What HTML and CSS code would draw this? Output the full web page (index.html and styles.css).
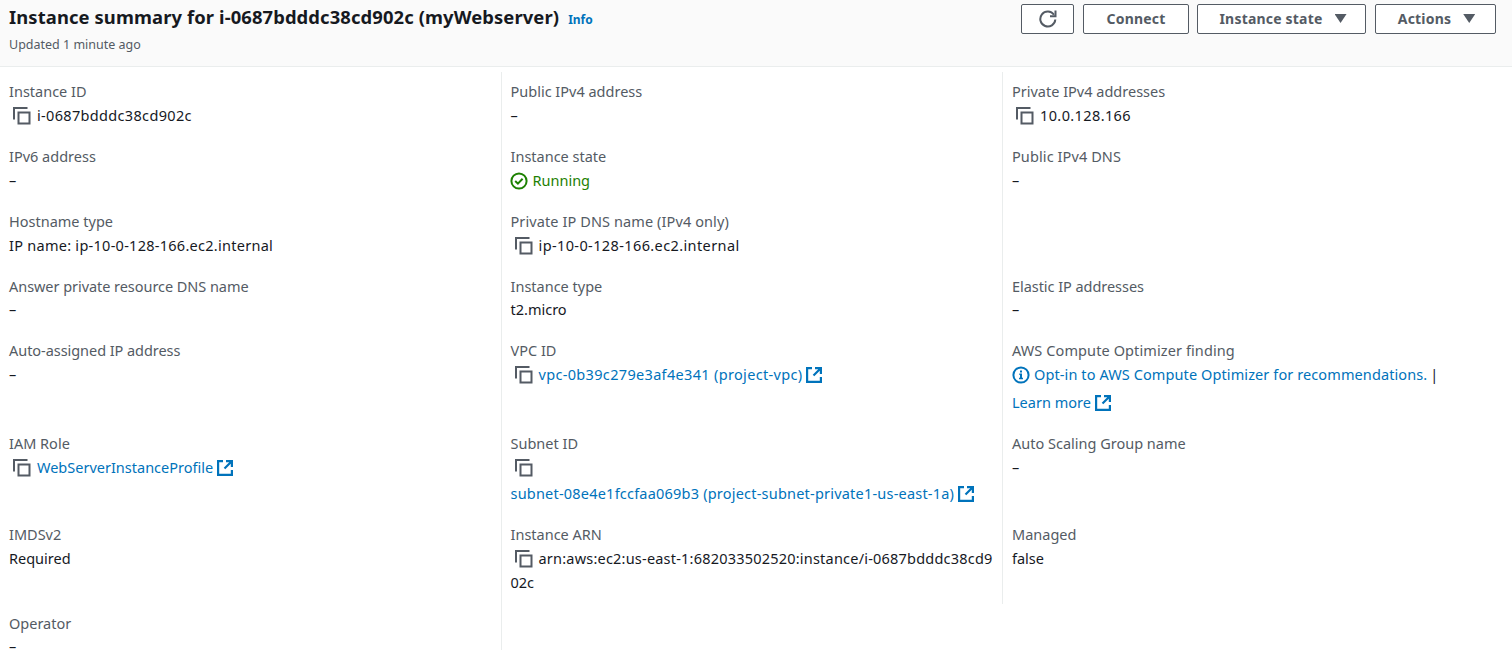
FILE: index.html
```html
<!DOCTYPE html>
<html lang="en">
<head>
<meta charset="utf-8">
<title>Instance summary</title>
<link rel="stylesheet" href="styles.css">
</head>
<body>
<svg class="sprite" aria-hidden="true">
  <symbol id="copy" viewBox="0 0 18 18"><path d="M1 12.5V1h13.5M5.5 5.5h11v11h-11z" fill="none" stroke="currentColor" stroke-width="2"/></symbol>
  <symbol id="external" viewBox="0 0 16 16"><path d="M6 1.1H1.1v13.8h13.8V10M9 1.1h5.9V7M14.5 1.5L7.5 8.5" fill="none" stroke="currentColor" stroke-width="2.2"/></symbol>
  <symbol id="check" viewBox="0 0 18 18"><circle cx="9" cy="9" r="7.6" fill="none" stroke="currentColor" stroke-width="2"/><path d="M5.2 9l2.7 2.6 4.7-4.8" fill="none" stroke="currentColor" stroke-width="2"/></symbol>
  <symbol id="info" viewBox="0 0 18 18"><circle cx="9" cy="9" r="7.6" fill="none" stroke="currentColor" stroke-width="2"/><path d="M8 4.5h2v2H8zM7.3 7.5H10v4.3h1v1.4H7v-1.4h1V8.9h-.7z" fill="currentColor"/></symbol>
  <symbol id="refresh" viewBox="0 0 18 18"><path d="M16.3 9.5A7.5 7.5 0 1 1 15 4.8" fill="none" stroke="currentColor" stroke-width="2"/><path d="M16.5 0.5V6.2H11" fill="none" stroke="currentColor" stroke-width="2"/></symbol>
</svg>
<header class="header">
  <div class="heading">
    <div class="title-row"><h1 class="title">Instance summary for i-0687bdddc38cd902c (myWebserver)</h1><a class="info-link">Info</a></div>
    <p class="updated">Updated 1 minute ago</p>
  </div>
  <div class="actions">
    <button class="btn btn-refresh"><svg class="icon"><use href="#refresh"/></svg></button>
    <button class="btn btn-connect">Connect</button>
    <button class="btn btn-state">Instance state<i class="caret"></i></button>
    <button class="btn btn-actions">Actions<i class="caret"></i></button>
  </div>
</header>
<main class="grid">
  <div class="cell"><div class="label">Instance ID</div><div class="value"><svg class="icon copy"><use href="#copy"/></svg><span class="ident">i-0687bdddc38cd902c</span></div></div>
  <div class="cell line"><div class="label">Public IPv4 address</div><div class="value">–</div></div>
  <div class="cell line"><div class="label">Private IPv4 addresses</div><div class="value"><svg class="icon copy"><use href="#copy"/></svg><span class="host">10.0.128.166</span></div></div>

  <div class="cell"><div class="label">IPv6 address</div><div class="value">–</div></div>
  <div class="cell line"><div class="label">Instance state</div><div class="value running"><svg class="icon status"><use href="#check"/></svg><span>Running</span></div></div>
  <div class="cell line"><div class="label wide">Public IPv4 DNS</div><div class="value">–</div></div>

  <div class="cell"><div class="label">Hostname type</div><div class="value"><span class="hostname">IP name: ip-10-0-128-166.ec2.internal</span></div></div>
  <div class="cell line"><div class="label wide">Private IP DNS name (IPv4 only)</div><div class="value"><svg class="icon copy"><use href="#copy"/></svg><span class="host">ip-10-0-128-166.ec2.internal</span></div></div>
  <div class="cell line"></div>

  <div class="cell"><div class="label tight">Answer private resource DNS name</div><div class="value raised">–</div></div>
  <div class="cell line"><div class="label">Instance type</div><div class="value raised">t2.micro</div></div>
  <div class="cell line"><div class="label tight">Elastic IP addresses</div><div class="value raised">–</div></div>

  <div class="cell"><div class="label tight">Auto-assigned IP address</div><div class="value">–</div></div>
  <div class="cell line"><div class="label">VPC ID</div><div class="value"><svg class="icon copy"><use href="#copy"/></svg><a class="link ident">vpc-0b39c279e3af4e341 (project-vpc)</a><svg class="icon external"><use href="#external"/></svg></div></div>
  <div class="cell line"><div class="label wide">AWS Compute Optimizer finding</div><div class="value"><svg class="icon status link"><use href="#info"/></svg><a class="link wide">Opt-in to AWS Compute Optimizer for recommendations.</a><span class="bar">|</span></div><div class="value learn"><a class="link">Learn more</a><svg class="icon external"><use href="#external"/></svg></div></div>

  <div class="cell"><div class="label">IAM Role</div><div class="value"><svg class="icon copy"><use href="#copy"/></svg><a class="link">WebServerInstanceProfile</a><svg class="icon external"><use href="#external"/></svg></div></div>
  <div class="cell line"><div class="label">Subnet ID</div><div class="value"><svg class="icon copy"><use href="#copy"/></svg></div><div class="value subnet"><a class="link path">subnet-08e4e1fccfaa069b3 (project-subnet-private1-us-east-1a)</a><svg class="icon external"><use href="#external"/></svg></div></div>
  <div class="cell line"><div class="label">Auto Scaling Group name</div><div class="value">–</div></div>

  <div class="cell"><div class="label">IMDSv2</div><div class="value">Required</div></div>
  <div class="cell line"><div class="label">Instance ARN</div><div class="value"><svg class="icon copy"><use href="#copy"/></svg><span class="path">arn:aws:ec2:us-east-1:682033502520:instance/i-0687bdddc38cd9</span></div><div class="value">02c</div></div>
  <div class="cell line"><div class="label">Managed</div><div class="value">false</div></div>

  <div class="cell"><div class="label">Operator</div><div class="value raised">–</div></div>
  <div class="cell line"></div>
</main>
</body>
</html>
```
FILE: styles.css
```css
* { box-sizing: border-box; }
body {
  margin: 0;
  height: 650px;
  overflow: hidden;
  background: #fff;
  color: #16191f;
  font: 14.5px/24px "Noto Sans", "Open Sans", sans-serif;
}
.sprite { position: absolute; width: 0; height: 0; }
.icon { display: block; flex: none; width: 18px; height: 18px; }
.header {
  display: flex;
  justify-content: space-between;
  height: 67px;
  padding: 4px 16px 0 9px;
  background: #fafafa;
  border-bottom: 1px solid #eaeded;
}
.heading { margin-top: -1px; }
.title-row { display: flex; align-items: baseline; gap: 9px; height: 29px; white-space: nowrap; }
.title { margin: 0; font-size: 18.4px; line-height: 28px; font-weight: 700; letter-spacing: 0.11px; }
.info-link { color: #0073bb; font-size: 12px; font-weight: 700; }
.updated { margin: 0; color: #545b64; font-size: 12.5px; line-height: 25px; }
.actions { display: flex; }
.btn {
  display: flex;
  align-items: center;
  justify-content: center;
  height: 30px;
  padding: 0;
  border: 1px solid #545b64;
  border-radius: 2px;
  background: #fff;
  color: #545b64;
  font: 700 14px/28px "Noto Sans", sans-serif;
  letter-spacing: 0.2px;
  white-space: nowrap;
}
.btn-refresh { width: 53px; margin-right: 9px; }
.btn-connect { width: 106px; margin-right: 8px; }
.btn-state { width: 169px; margin-right: 9px; padding-left: 3px; }
.btn-actions { width: 121px; padding-left: 2px; }
.caret {
  width: 12px;
  height: 9px;
  margin: 0 0 1px 12px;
  background: #545b64;
  clip-path: polygon(0 0, 100% 0, 50% 100%);
}
.grid {
  display: grid;
  grid-template-columns: 501px 501px 510px;
  grid-template-rows: 65px 65px 65px 64px 93px 91px 89px 65px;
  padding-top: 5px;
}
.cell { padding: 7px 0 0 9px; white-space: nowrap; }
.line { border-left: 1px solid #eaeded; }
.line:nth-child(3n + 2) { padding-left: 8.5px; }
.label { color: #545b64; }
.value { display: flex; align-items: center; height: 24px; }
.value .icon { margin-top: 1px; }
.copy { margin: 0 6px 0 4px; color: #545b64; }
.status { margin: 0 4.5px 0 -0.5px; }
.external { width: 16px; height: 16px; margin-left: 4px; color: #0073bb; }
.link { color: #0073bb; }
.running { color: #1d8102; }
.bar { margin-left: 3px; }
.learn { height: 32px; }
.subnet { height: 28px; }
.raised { height: 22px; }
.tight { letter-spacing: -0.05px; }
.wide { letter-spacing: 0.1px; }
.path { letter-spacing: 0.21px; }
.hostname { letter-spacing: 0.27px; }
.ident { letter-spacing: 0.33px; }
.host { letter-spacing: 0.39px; }
```
